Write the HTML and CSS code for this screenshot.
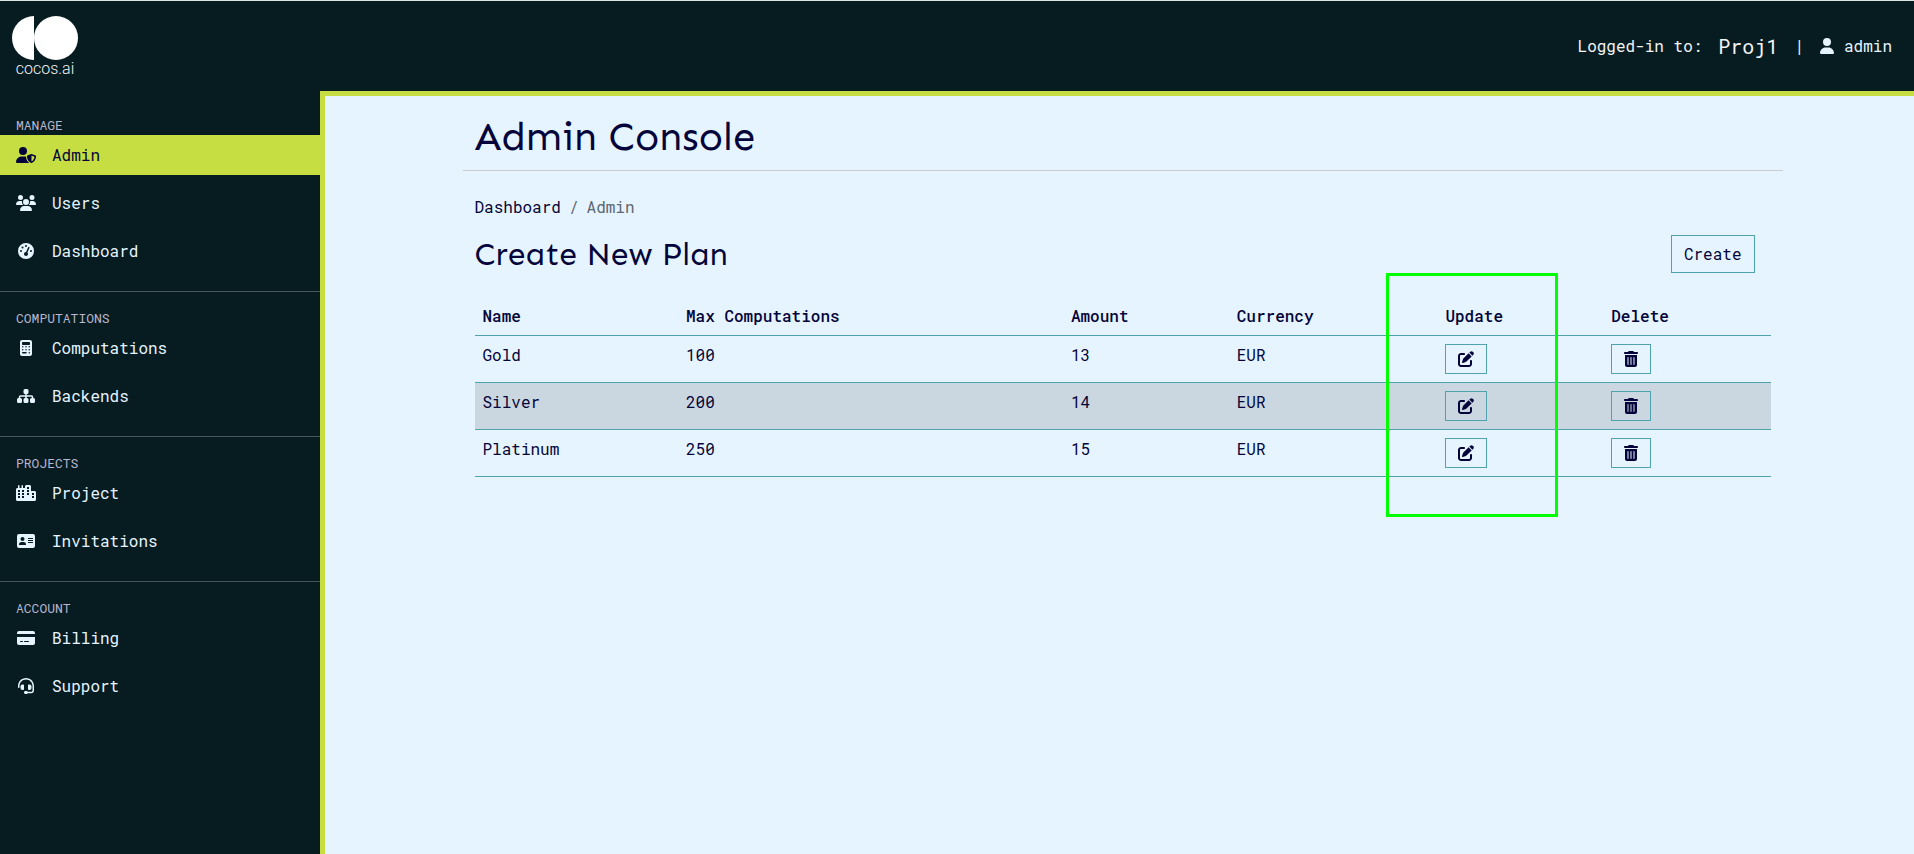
FILE: index.html
```html
<!DOCTYPE html>
<html lang="en">
<head>
<meta charset="utf-8">
<meta name="viewport" content="width=device-width, initial-scale=1">
<title>Admin Console</title>
<link rel="stylesheet" href="styles.css">
</head>
<body>
<svg class="sprite" aria-hidden="true">
  <symbol id="user" viewBox="0 0 448 512"><path d="M224 256A128 128 0 1 0 224 0a128 128 0 1 0 0 256zm-45.7 48C79.8 304 0 383.8 0 482.3C0 498.7 13.3 512 29.7 512H418.3c16.4 0 29.7-13.3 29.7-29.7C448 383.8 368.2 304 269.7 304H178.3z"/></symbol>
  <symbol id="edit" viewBox="0 0 512 512"><path d="M471.6 21.7c-21.9-21.9-57.3-21.9-79.2 0L362.3 51.7l97.9 97.9 30.1-30.1c21.9-21.9 21.9-57.3 0-79.2L471.6 21.7zm-299.2 220c-6.1 6.1-10.8 13.6-13.5 21.9l-29.6 88.8c-2.9 8.6-.6 18.1 5.8 24.6s15.9 8.7 24.6 5.8l88.8-29.6c8.2-2.7 15.7-7.4 21.9-13.5L437.7 172.3 339.7 74.3 172.4 241.7zM96 64C43 64 0 107 0 160V416c0 53 43 96 96 96H352c53 0 96-43 96-96V320c0-17.7-14.3-32-32-32s-32 14.3-32 32v96c0 17.7-14.3 32-32 32H96c-17.7 0-32-14.3-32-32V160c0-17.7 14.3-32 32-32h96c17.7 0 32-14.3 32-32s-14.3-32-32-32H96z"/></symbol>
  <symbol id="trash" viewBox="0 0 448 512"><path d="M135.2 17.7L128 32H32C14.3 32 0 46.3 0 64S14.3 96 32 96H416c17.7 0 32-14.3 32-32s-14.3-32-32-32H320l-7.2-14.3C307.4 6.8 296.3 0 284.2 0H163.8c-12.1 0-23.2 6.8-28.6 17.7zM416 128H32V448c0 35.3 28.7 64 64 64H352c35.3 0 64-28.7 64-64V128zM144 208V432c0 8.8-7.2 16-16 16s-16-7.2-16-16V208c0-8.8 7.2-16 16-16s16 7.2 16 16zm96 0V432c0 8.8-7.2 16-16 16s-16-7.2-16-16V208c0-8.8 7.2-16 16-16s16 7.2 16 16zm96 0V432c0 8.8-7.2 16-16 16s-16-7.2-16-16V208c0-8.8 7.2-16 16-16s16 7.2 16 16z"/></symbol>
</svg>

<header class="topbar">
  <a class="logo" href="#" aria-label="cocos.ai">
    <svg class="logo-mark" viewBox="0 0 66 44" aria-hidden="true"><path d="M22 0A22 22 0 0 0 22 44Z"/><circle cx="44" cy="22" r="22"/></svg>
    <span class="logo-name">cocos.ai</span>
  </a>
  <div class="session">
    <span>Logged-in to:</span>
    <a class="project" href="#">Proj1</a>
    <span>|</span>
    <a class="account" href="#"><svg class="icon-narrow" aria-hidden="true"><use href="#user"/></svg>admin</a>
  </div>
</header>

<div class="layout">
  <nav class="sidebar">
    <section class="group">
      <h2 class="group-title">MANAGE</h2>
      <a class="item active" href="#"><svg class="item-icon" viewBox="0 0 640 512" aria-hidden="true"><path d="M224 256A128 128 0 1 0 224 0a128 128 0 1 0 0 256zm-45.7 48C79.8 304 0 383.8 0 482.3C0 498.7 13.3 512 29.7 512H418.3c1.8 0 3.5-.2 5.3-.5c-76.3-55.1-99.8-141-103.1-200.2c-16.1-4.8-33.1-7.3-50.7-7.3H178.3zm308.8-78.3l-120 48C358 277.4 352 286.2 352 296c0 63.3 25.9 168.8 134.8 214.2c5.9 2.5 12.6 2.5 18.5 0C614.1 464.8 640 359.3 640 296c0-9.8-6-18.6-15.1-22.3l-120-48c-5.7-2.3-12.1-2.3-17.8 0zM591.4 312c-3.9 50.7-27.2 116.7-95.4 149.7V273.8L591.4 312z"/></svg>Admin</a>
      <a class="item" href="#"><svg class="item-icon" viewBox="0 0 640 512" aria-hidden="true"><path d="M144 0a80 80 0 1 1 0 160A80 80 0 1 1 144 0zM512 0a80 80 0 1 1 0 160A80 80 0 1 1 512 0zM0 298.7C0 239.8 47.8 192 106.7 192h42.7c15.9 0 31 3.5 44.6 9.7c-1.3 7.2-1.9 14.7-1.9 22.3c0 38.2 16.8 72.5 43.3 96H21.3C9.6 320 0 310.4 0 298.7zM405.3 320c26.6-23.5 43.3-57.8 43.3-96c0-7.6-.7-15-1.9-22.3c13.6-6.3 28.7-9.7 44.6-9.7h42.7C592.2 192 640 239.8 640 298.7c0 11.8-9.6 21.3-21.3 21.3H405.3zM224 224a96 96 0 1 1 192 0 96 96 0 1 1 -192 0zM128 485.3C128 411.7 187.7 352 261.3 352H378.7C452.3 352 512 411.7 512 485.3c0 14.7-11.9 26.7-26.7 26.7H154.7c-14.7 0-26.7-11.9-26.7-26.7z"/></svg>Users</a>
      <a class="item" href="#"><svg class="item-icon" viewBox="0 0 512 512" aria-hidden="true"><path d="M0 256a256 256 0 1 1 512 0A256 256 0 1 1 0 256zM288 96a32 32 0 1 0 -64 0 32 32 0 1 0 64 0zM256 416c35.3 0 64-28.7 64-64c0-17.4-6.9-33.1-18.1-44.6L366 161.7c5.3-12.1-.2-26.3-12.3-31.6s-26.3 .2-31.6 12.3L257.9 288c-.6 0-1.3 0-1.9 0c-35.3 0-64 28.7-64 64s28.7 64 64 64zM176 144a32 32 0 1 0 -64 0 32 32 0 1 0 64 0zM96 288a32 32 0 1 0 0-64 32 32 0 1 0 0 64zm352-32a32 32 0 1 0 -64 0 32 32 0 1 0 64 0z" fill-rule="evenodd"/></svg>Dashboard</a>
    </section>
    <section class="group">
      <h2 class="group-title">COMPUTATIONS</h2>
      <a class="item" href="#"><svg class="item-icon" viewBox="0 0 384 512" aria-hidden="true"><path fill-rule="evenodd" d="M64 0C28.7 0 0 28.7 0 64V448c0 35.3 28.7 64 64 64H320c35.3 0 64-28.7 64-64V64c0-35.3-28.7-64-64-64H64zM96 64H288c17.7 0 32 14.3 32 32v32c0 17.7-14.3 32-32 32H96c-17.7 0-32-14.3-32-32V96c0-17.7 14.3-32 32-32zM64 216a24 24 0 1 0 48 0a24 24 0 1 0-48 0zM168 216a24 24 0 1 0 48 0a24 24 0 1 0-48 0zM272 216a24 24 0 1 0 48 0a24 24 0 1 0-48 0zM64 312a24 24 0 1 0 48 0a24 24 0 1 0-48 0zM168 312a24 24 0 1 0 48 0a24 24 0 1 0-48 0zM272 312a24 24 0 1 0 48 0a24 24 0 1 0-48 0zM272 408a24 24 0 1 0 48 0a24 24 0 1 0-48 0zM88 384H192a24 24 0 1 1 0 48H88a24 24 0 1 1 0-48z"/></svg>Computations</a>
      <a class="item" href="#"><svg class="item-icon" viewBox="0 0 576 512" aria-hidden="true"><path d="M256 32h64a48 48 0 0 1 48 48v64a48 48 0 0 1-48 48h-8v40h152a56 56 0 0 1 56 56v32h8a48 48 0 0 1 48 48v64a48 48 0 0 1-48 48h-64a48 48 0 0 1-48-48v-64a48 48 0 0 1 48-48h8v-32a8 8 0 0 0-8-8H312v40h8a48 48 0 0 1 48 48v64a48 48 0 0 1-48 48h-64a48 48 0 0 1-48-48v-64a48 48 0 0 1 48-48h8v-40H112a8 8 0 0 0-8 8v32h8a48 48 0 0 1 48 48v64a48 48 0 0 1-48 48H48a48 48 0 0 1-48-48v-64a48 48 0 0 1 48-48h8v-32a56 56 0 0 1 56-56h152v-40h-8a48 48 0 0 1-48-48V80a48 48 0 0 1 48-48z"/></svg>Backends</a>
    </section>
    <section class="group">
      <h2 class="group-title">PROJECTS</h2>
      <a class="item" href="#"><svg class="item-icon" viewBox="0 0 640 512" aria-hidden="true"><path fill-rule="evenodd" d="M480 48c0-26.5-21.5-48-48-48H336c-26.5 0-48 21.5-48 48V96H224V24c0-13.3-10.7-24-24-24s-24 10.7-24 24V96H112V24c0-13.3-10.7-24-24-24S64 10.7 64 24V96H48C21.5 96 0 117.5 0 144V464c0 26.5 21.5 48 48 48H592c26.5 0 48-21.5 48-48V240c0-26.5-21.5-48-48-48H480V48zM64 160h64v64H64zM64 256h64v64H64zM64 352h64v64H64zM192 160h64v64h-64zM192 256h64v64h-64zM192 352h64v64h-64zM352 64h64v64h-64zM352 160h64v64h-64zM352 256h64v64h-64zM512 256h64v64h-64zM512 352h64v64h-64z"/></svg>Project</a>
      <a class="item" href="#"><svg class="item-icon" viewBox="0 0 576 512" aria-hidden="true"><path fill-rule="evenodd" d="M64 32H512a64 64 0 0 1 64 64V416a64 64 0 0 1-64 64H64a64 64 0 0 1-64-64V96a64 64 0 0 1 64-64zM176 128a64 64 0 1 0 0 128a64 64 0 1 0 0-128zM144 288a80 80 0 0 0-80 80a16 16 0 0 0 16 16H272a16 16 0 0 0 16-16a80 80 0 0 0-80-80zM352 160h160v32H352zM352 224h160v32H352zM352 288h160v32H352z"/></svg>Invitations</a>
    </section>
    <section class="group">
      <h2 class="group-title">ACCOUNT</h2>
      <a class="item" href="#"><svg class="item-icon" viewBox="0 0 576 512" aria-hidden="true"><path fill-rule="evenodd" d="M64 32H512a64 64 0 0 1 64 64v32H0V96a64 64 0 0 1 64-64zM0 224H576V416a64 64 0 0 1-64 64H64a64 64 0 0 1-64-64zM112 352a16 16 0 0 0 0 32h64a16 16 0 0 0 0-32zM240 352a16 16 0 0 0 0 32h128a16 16 0 0 0 0-32z"/></svg>Billing</a>
      <a class="item" href="#"><svg class="item-icon" viewBox="0 0 512 512" aria-hidden="true"><path d="M256 48C141.1 48 48 141.1 48 256v40c0 13.3-10.7 24-24 24s-24-10.7-24-24V256C0 114.6 114.6 0 256 0S512 114.6 512 256V400.1c0 48.6-39.4 88-88.1 88L313.6 488c-8.3 14.3-23.8 24-41.6 24H240c-26.5 0-48-21.5-48-48s21.5-48 48-48h32c17.8 0 33.3 9.7 41.6 24l110.4 .1c22.1 0 40-17.9 40-40V256c0-114.9-93.1-208-208-208zM144 208h16c17.7 0 32 14.3 32 32V352c0 17.7-14.3 32-32 32H144c-35.3 0-64-28.7-64-64V272c0-35.3 28.7-64 64-64zm224 0c35.3 0 64 28.7 64 64v48c0 35.3-28.7 64-64 64H352c-17.7 0-32-14.3-32-32V240c0-17.7 14.3-32 32-32h16z"/></svg>Support</a>
    </section>
  </nav>

  <main class="main">
    <div class="container">
      <h1 class="page-title">Admin Console</h1>
      <div class="content">
        <nav class="breadcrumb" aria-label="Breadcrumb"><a href="#">Dashboard</a><span>/</span><span>Admin</span></nav>
        <div class="section-head">
          <h2 class="section-title">Create New Plan</h2>
          <button class="btn btn-create" type="button">Create</button>
        </div>
        <table class="plans">
          <colgroup><col class="c-name"><col class="c-max"><col class="c-amount"><col class="c-currency"><col class="c-update"><col></colgroup>
          <thead>
            <tr><th>Name</th><th>Max Computations</th><th>Amount</th><th>Currency</th><th class="marked">Update<span class="marker"></span></th><th>Delete</th></tr>
          </thead>
          <tbody>
            <tr><td>Gold</td><td>100</td><td>13</td><td>EUR</td><td><button class="btn btn-icon" type="button" aria-label="Update Gold"><svg class="icon" aria-hidden="true"><use href="#edit"/></svg></button></td><td><button class="btn btn-icon" type="button" aria-label="Delete Gold"><svg class="icon-narrow" aria-hidden="true"><use href="#trash"/></svg></button></td></tr>
            <tr><td>Silver</td><td>200</td><td>14</td><td>EUR</td><td><button class="btn btn-icon" type="button" aria-label="Update Silver"><svg class="icon" aria-hidden="true"><use href="#edit"/></svg></button></td><td><button class="btn btn-icon" type="button" aria-label="Delete Silver"><svg class="icon-narrow" aria-hidden="true"><use href="#trash"/></svg></button></td></tr>
            <tr><td>Platinum</td><td>250</td><td>15</td><td>EUR</td><td><button class="btn btn-icon" type="button" aria-label="Update Platinum"><svg class="icon" aria-hidden="true"><use href="#edit"/></svg></button></td><td><button class="btn btn-icon" type="button" aria-label="Delete Platinum"><svg class="icon-narrow" aria-hidden="true"><use href="#trash"/></svg></button></td></tr>
          </tbody>
        </table>
      </div>
    </div>
  </main>
</div>
</body>
</html>
```
FILE: styles.css
```css
:root {
  --dark: #071c21;
  --lime: #c6de41;
  --pale: #e6f4ff;
  --navy: #04043a;
  --teal: #4fa3ad;
}

* { box-sizing: border-box; }

body {
  margin: 0;
  min-height: 100vh;
  display: flex;
  flex-direction: column;
  background: var(--dark);
  color: var(--navy);
  font: 16px/24px "Roboto Mono", "DejaVu Sans Mono", "Liberation Mono", monospace;
}

a { color: inherit; text-decoration: none; }
h1, h2 { margin: 0; font-weight: 400; }
svg { fill: currentColor; }

.sprite { display: none; }
.icon { width: 16px; height: 16px; }
.icon-narrow { width: 14px; height: 16px; }

.topbar {
  display: flex;
  justify-content: space-between;
  align-items: center;
  height: 91px;
  padding: 0 22px 0 12px;
  border-top: 1px solid #dfe5e2;
  color: #f2f4f5;
}

.logo {
  display: flex;
  flex-direction: column;
  align-items: center;
  padding-top: 2px;
}

.logo-mark { width: 66px; height: 44px; color: #fff; }

.logo-name {
  font: 300 16px/18px Roboto, sans-serif;
}

.session { display: flex; align-items: center; gap: 16px; }
.project { font-size: 20px; }
.account { display: flex; align-items: center; gap: 10px; color: var(--pale); }

.layout { display: flex; flex: 1; }

.sidebar {
  width: 320px;
  flex: none;
  padding-top: 24px;
  color: var(--pale);
}

.group {
  display: flex;
  flex-direction: column;
  gap: 8px;
  padding-bottom: 20px;
}

.group + .group {
  padding-top: 16px;
  border-top: 1px solid #45555a;
}

.group-title {
  margin-bottom: -8px;
  padding-left: 16px;
  color: #b9b6cf;
  font-size: 13px;
  line-height: 20px;
}

.item {
  display: flex;
  align-items: center;
  gap: 16px;
  height: 40px;
  padding: 0 16px;
}

.item.active { background: var(--lime); color: var(--navy); }
.item-icon { width: 20px; height: 16px; }

.main {
  flex: 1;
  padding-left: 6px;
  border-top: 5px solid var(--lime);
  border-left: 5px solid var(--lime);
  background: var(--pale);
}

.container { max-width: 1320px; margin: 0 auto; }

.page-title {
  padding: 17px 12px 9px;
  border-bottom: 1px solid #c9cccf;
  font: 40px/48px Sen, "Open Sans", sans-serif;
}

.content { padding: 24px 12px; }

.breadcrumb { display: flex; gap: 8px; color: #5c6870; }
.breadcrumb a { color: var(--navy); }

.section-head {
  display: flex;
  justify-content: space-between;
  align-items: center;
  margin: 16px 0 22px;
  padding-right: 16px;
}

.section-title { font: 32px/38px Sen, "Open Sans", sans-serif; }

.btn {
  border: 1px solid var(--teal);
  background: transparent;
  color: inherit;
  font: inherit;
  cursor: pointer;
}

.btn-create { padding: 6px 12px; }
.btn-icon { display: flex; padding: 6px 12px; }

.plans {
  width: 100%;
  border-collapse: separate;
  border-spacing: 0;
  table-layout: fixed;
}

.c-name { width: 15.7%; }
.c-max { width: 29.7%; }
.c-amount { width: 12.8%; }
.c-currency { width: 16.1%; }
.c-update { width: 12.8%; }

.plans th, .plans td {
  padding: 8px;
  border-bottom: 1px solid var(--teal);
  line-height: 22px;
  text-align: left;
  vertical-align: top;
}

.plans th { padding-top: 10px; font-weight: 500; }
.plans tbody tr:nth-child(even) { background: #cad7e0; }
.plans .btn-icon { height: 30px; }

.marked { position: relative; }

.marker {
  position: absolute;
  top: -22px;
  left: -51px;
  width: 172px;
  height: 244px;
  border: 3px solid #0f0;
  pointer-events: none;
}
```
